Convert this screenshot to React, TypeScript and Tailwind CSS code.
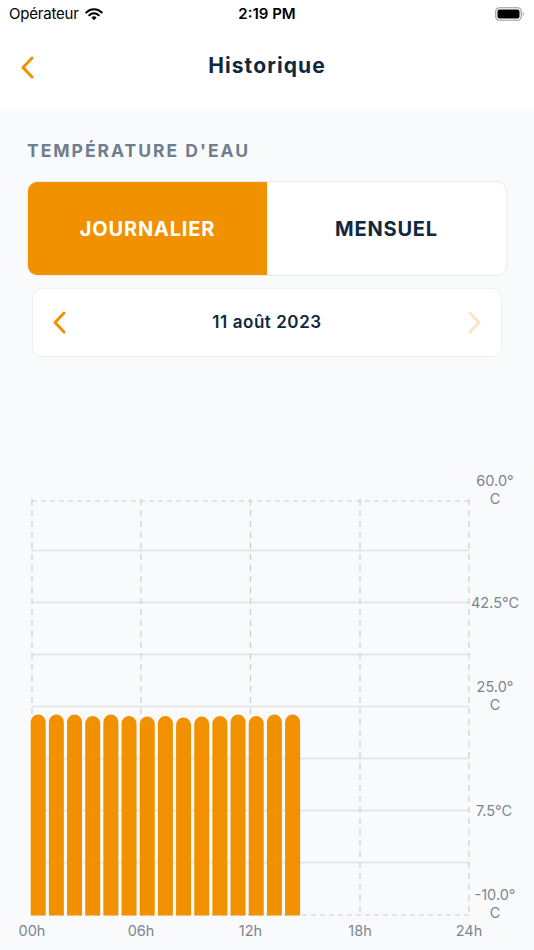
import React from "react";

const ORANGE = "#f29100";

const hourLines = [32, 141, 250.5, 360, 469];
const solidLines = [551.5, 603.5, 655.5, 707.5, 759.5, 811.5, 863.5];
const barTops = [715.5, 715.5, 715.5, 717, 715.5, 717, 717.5, 717, 718.5, 717.5, 717, 715.5, 717, 715.5, 715.5];

function Chevron({ dir, color }: { dir: "left" | "right"; color: string }) {
  const d = dir === "left" ? "M12 2 L3 11.5 L12 21" : "M3 2 L12 11.5 L3 21";
  return (
    <svg width="15" height="23" viewBox="0 0 15 23">
      <path d={d} fill="none" stroke={color} strokeWidth="3" strokeLinecap="round" strokeLinejoin="round" />
    </svg>
  );
}

function StatusBar() {
  return (
    <div className="relative flex h-[28px] items-center justify-between bg-white px-[9px] text-black">
      <div className="flex items-center gap-[6px]">
        <span className="text-[15px] tracking-[-0.2px]">Opérateur</span>
        <svg width="18" height="13" viewBox="0 0 18 13">
          <path d="M1.3 4.4 A11 11 0 0 1 16.7 4.4" fill="none" stroke="black" strokeWidth="2.1" strokeLinecap="round" />
          <path d="M4.3 7.2 A6.8 6.8 0 0 1 13.7 7.2" fill="none" stroke="black" strokeWidth="2.1" strokeLinecap="round" />
          <path d="M9 12.2 L6.4 9.6 A3.7 3.7 0 0 1 11.6 9.6 Z" fill="black" />
        </svg>
      </div>
      <span className="absolute left-1/2 -translate-x-1/2 text-[15px] font-semibold">2:19 PM</span>
      <svg width="30" height="14" viewBox="0 0 30 14">
        <rect x="0.75" y="0.75" width="25.5" height="12.5" rx="3.6" fill="none" stroke="#9b9b9b" strokeWidth="1.2" />
        <rect x="2.5" y="2.5" width="22" height="9" rx="2" fill="black" />
        <path d="M27.8 4.8 C29 5.2 29 8.8 27.8 9.2 Z" fill="#9b9b9b" />
      </svg>
    </div>
  );
}

// y-axis label that wraps onto two lines like the reference
function AxisLabel({ x, y, lines }: { x: number; y: number; lines: string[] }) {
  return (
    <text x={x} y={y}>
      {lines.map((l, i) => (
        <tspan key={i} x={x} dy={i === 0 ? 0 : 18}>
          {l}
        </tspan>
      ))}
    </text>
  );
}

function TempChart() {
  return (
    <svg width="534" height="592" viewBox="0 358 534 592" className="block">
      {solidLines.map((y) => (
        <line key={y} x1="32" x2="469" y1={y} y2={y} stroke="#dde1e4" strokeWidth="1.5" />
      ))}
      {[502, 916].map((y) => (
        <line key={y} x1="32" x2="469" y1={y} y2={y} stroke="#ccd0d4" strokeWidth="1.2" strokeDasharray="5 4" />
      ))}
      {hourLines.map((x) => (
        <line key={x} x1={x} x2={x} y1="500" y2="918" stroke="#c9cdd2" strokeWidth="1.2" strokeDasharray="6 5" />
      ))}
      {barTops.map((top, i) => {
        const x = 30.7 + 18.17 * i;
        const w = 15;
        const r = w / 2;
        return (
          <path
            key={i}
            d={`M${x} 916.5 V${top + r} A${r} ${r} 0 0 1 ${x + w} ${top + r} V916.5 Z`}
            fill={ORANGE}
          />
        );
      })}
      <g fill="#7c8691" fontSize="14.5" fontFamily="Inter, sans-serif" textAnchor="middle">
        <AxisLabel x={495} y={486.5} lines={["60.0°", "C"]} />
        <text x="495" y="609">42.5°C</text>
        <AxisLabel x={495} y={693} lines={["25.0°", "C"]} />
        <text x="494" y="817">7.5°C</text>
        <AxisLabel x={495} y={901} lines={["-10.0°", "C"]} />
        <text x="32" y="937">00h</text>
        <text x="141" y="937">06h</text>
        <text x="250.5" y="937">12h</text>
        <text x="360" y="937">18h</text>
        <text x="469" y="937">24h</text>
      </g>
    </svg>
  );
}

export default function App() {
  return (
    <div className="h-[950px] w-[534px] overflow-hidden bg-[#f9fafc] font-['Inter',sans-serif]">
      <StatusBar />
      <div className="relative flex h-[81px] items-center justify-center bg-white pb-[6px]">
        <div className="absolute left-[20px] top-[28px]">
          <Chevron dir="left" color={ORANGE} />
        </div>
        <h1 className="text-[21px] font-bold tracking-[1.1px] text-[#0f2842]">Historique</h1>
      </div>

      <div className="px-[27px] pt-[31px]">
        <h2 className="text-[17.5px] font-bold leading-[22px] tracking-[2px] text-[#6e7e8f]">TEMPÉRATURE D'EAU</h2>

        <div className="mt-[19px] flex h-[95px] overflow-hidden rounded-[10px] border border-[#ececec] bg-white">
          <div className="flex flex-1 items-center justify-center bg-[#f29100] text-[20px] font-bold tracking-[0.8px] text-white">
            JOURNALIER
          </div>
          <div className="flex flex-1 items-center justify-center text-[20px] font-bold tracking-[0.8px] text-[#0f2842]">
            MENSUEL
          </div>
        </div>

        <div className="mx-[5px] mt-[12px] flex h-[69px] items-center justify-between rounded-[10px] border border-[#efefef] bg-white px-[19px]">
          <Chevron dir="left" color={ORANGE} />
          <span className="text-[17px] font-semibold tracking-[0.55px] text-[#0f2842]">11 août 2023</span>
          <Chevron dir="right" color="#fde4c2" />
        </div>
      </div>

      <TempChart />
    </div>
  );
}
